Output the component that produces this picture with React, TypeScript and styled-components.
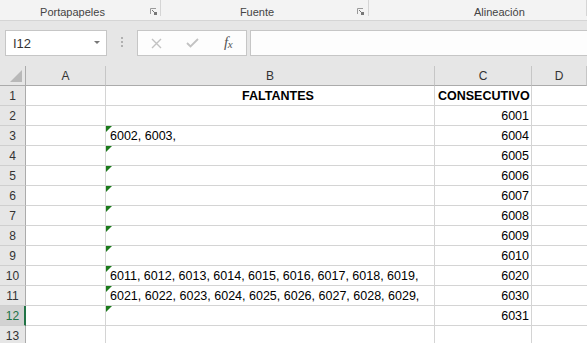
import React from 'react';
import styled, { createGlobalStyle } from 'styled-components';

const Global = createGlobalStyle`
  html, body { margin: 0; padding: 0; background: #e6e6e6; overflow: hidden; }
  body { font-family: "Liberation Sans", Arial, sans-serif; }
`;

const Page = styled.div`
  width: 587px;
  height: 343px;
  overflow: hidden;
  background: #e6e6e6;
  display: flex;
  flex-direction: column;
`;

const Ribbon = styled.div`
  display: flex;
  height: 21px;
  flex-shrink: 0;
  box-sizing: border-box;
  background: #f3f3f3;
  border-bottom: 1px solid #d5d5d5;
`;

const Group = styled.div<{ $w?: number }>`
  position: relative;
  display: flex;
  align-items: flex-start;
  ${(p) => (p.$w ? `width: ${p.$w}px;` : 'flex: 1;')}
  &::after {
    content: '';
    position: absolute;
    right: 0;
    top: 0;
    height: 16px;
    border-right: 1px solid #d5d5d5;
  }
`;

const GroupLabel = styled.div<{ $pl?: number; $pr?: number; $align?: string }>`
  flex: 1;
  padding-top: 5px;
  line-height: 14px;
  font-size: 11px;
  color: #444;
  text-align: ${(p) => p.$align || 'center'};
  padding-left: ${(p) => p.$pl || 0}px;
  padding-right: ${(p) => p.$pr || 0}px;
`;

const Launcher = styled.svg<{ $mr: number }>`
  width: 7px;
  height: 7px;
  margin-top: 8px;
  margin-right: ${(p) => p.$mr}px;
`;

const FormulaBar = styled.div`
  display: flex;
  align-items: stretch;
  height: 26px;
  margin: 9px 0 10px 5px;
  flex-shrink: 0;
`;

const NameBox = styled.div`
  width: 102px;
  box-sizing: border-box;
  border: 1px solid #c6c6c6;
  background: #fff;
  display: flex;
  align-items: center;
  font-size: 13px;
  color: #333;
  padding-left: 7px;
`;

const DropArrow = styled.span`
  margin-left: auto;
  margin-right: 6px;
  width: 0;
  height: 0;
  border-left: 3px solid transparent;
  border-right: 3px solid transparent;
  border-top: 3px solid #777;
  margin-top: -2px;
`;

const DotsSlot = styled.div`
  width: 30px;
  display: flex;
  flex-direction: column;
  align-items: center;
  justify-content: center;
  gap: 2px;
  margin-top: -2px;
`;

const Dot = styled.span`
  width: 2px;
  height: 2px;
  background: #b0b0b0;
`;

const FxBox = styled.div`
  width: 110px;
  box-sizing: border-box;
  border: 1px solid #c6c6c6;
  background: #fdfdfd;
  display: flex;
`;

const FxSlot = styled.div`
  width: 36px;
  display: flex;
  align-items: center;
  justify-content: center;
`;

const FxText = styled.span`
  font-family: "Liberation Serif", "Times New Roman", serif;
  font-style: italic;
  font-size: 15px;
  color: #555;
  letter-spacing: -0.5px;
  margin-top: -2px;
  & > small {
    font-size: 11px;
    position: relative;
    top: 1px;
  }
`;

const Input = styled.div`
  flex: 1;
  margin-left: 3px;
  margin-right: -4px;
  box-sizing: border-box;
  border: 1px solid #c6c6c6;
  background: #fdfdfd;
`;

const Sheet = styled.div`
  display: grid;
  grid-template-columns: 26px 80px 329px 97px 1fr;
  grid-auto-rows: 20px;
  background: #fff;
  font-size: 12.5px;
  color: #000;
`;

const ColHead = styled.div<{ $corner?: boolean }>`
  box-sizing: border-box;
  background: #e6e6e6;
  border-right: 1px solid ${(p) => (p.$corner ? '#ababab' : '#c6c6c6')};
  border-bottom: 1px solid #ababab;
  display: flex;
  align-items: center;
  justify-content: center;
  font-size: 12px;
  color: #333;
  position: relative;
`;

const CornerTri = styled.svg`
  position: absolute;
  right: 3px;
  bottom: 3px;
  width: 12px;
  height: 12px;
`;

const RowHead = styled.div<{ $sel?: boolean }>`
  box-sizing: border-box;
  background: ${(p) => (p.$sel ? '#d2d2d2' : '#e6e6e6')};
  border-right: ${(p) => (p.$sel ? '2px solid #217346' : '1px solid #ababab')};
  border-bottom: 1px solid #cfcfcf;
  display: flex;
  align-items: center;
  justify-content: center;
  padding-left: ${(p) => (p.$sel ? 1 : 0)}px;
  font-size: 12px;
  color: ${(p) => (p.$sel ? '#217346' : '#333')};
`;

const Cell = styled.div<{ $align?: 'left' | 'right' | 'center'; $bold?: boolean; $flag?: boolean; $last?: boolean; $pl?: number }>`
  position: relative;
  box-sizing: border-box;
  border-right: ${(p) => (p.$last ? 'none' : '1px solid #d4d4d4')};
  border-bottom: 1px solid #d4d4d4;
  padding: 1px 2px 0 ${(p) => (p.$pl ?? 4)}px;
  line-height: 18px;
  white-space: nowrap;
  overflow: visible;
  text-align: ${(p) => p.$align || 'left'};
  font-weight: ${(p) => (p.$bold ? 700 : 400)};
  ${(p) =>
    p.$flag
      ? `&::before {
    content: '';
    position: absolute;
    left: 0;
    top: 0;
    width: 0;
    height: 0;
    border-top: 6px solid #1a7a1a;
    border-right: 6px solid transparent;
  }`
      : ''}
`;

type Row = { b?: string; c?: string; flag?: boolean };

const rows: Row[] = [
  { c: '6001' },
  { b: '6002, 6003,', c: '6004', flag: true },
  { c: '6005', flag: true },
  { c: '6006', flag: true },
  { c: '6007', flag: true },
  { c: '6008', flag: true },
  { c: '6009', flag: true },
  { c: '6010', flag: true },
  { b: '6011, 6012, 6013, 6014, 6015, 6016, 6017, 6018, 6019,', c: '6020', flag: true },
  { b: '6021, 6022, 6023, 6024, 6025, 6026, 6027, 6028, 6029,', c: '6030', flag: true },
  { c: '6031', flag: true },
  {},
];

const LauncherIcon = ({ mr }: { mr: number }) => (
  <Launcher $mr={mr} viewBox="0 0 7 7">
    <path d="M0.5 6 V0.5 H6" stroke="#9a9a9a" strokeWidth="1" fill="none" />
    <path d="M2 2 L5 5" stroke="#777" strokeWidth="1" />
    <rect x="4" y="4" width="3" height="3" fill="#777" />
  </Launcher>
);

export default function App() {
  return (
    <Page>
      <Global />
      <Ribbon>
        <Group $w={161}>
          <GroupLabel $pr={5}>Portapapeles</GroupLabel>
          <LauncherIcon mr={4} />
        </Group>
        <Group $w={208}>
          <GroupLabel $pr={4}>Fuente</GroupLabel>
          <LauncherIcon mr={5} />
        </Group>
        <Group>
          <GroupLabel $align="left" $pl={105}>Alineación</GroupLabel>
        </Group>
      </Ribbon>
      <FormulaBar>
        <NameBox>
          I12
          <DropArrow />
        </NameBox>
        <DotsSlot>
          <Dot />
          <Dot />
          <Dot />
        </DotsSlot>
        <FxBox>
          <FxSlot>
            <svg width="11" height="11" viewBox="0 0 11 11">
              <path d="M1 1 L10 10 M10 1 L1 10" stroke="#c2c2c2" strokeWidth="1.4" />
            </svg>
          </FxSlot>
          <FxSlot>
            <svg width="13" height="10" viewBox="0 0 13 10">
              <path d="M1 5 L4.5 8.5 L12 1" stroke="#c2c2c2" strokeWidth="1.8" fill="none" />
            </svg>
          </FxSlot>
          <FxSlot>
            <FxText>
              f<small>x</small>
            </FxText>
          </FxSlot>
        </FxBox>
        <Input />
      </FormulaBar>
      <Sheet>
        <ColHead $corner>
          <CornerTri viewBox="0 0 12 12">
            <polygon points="12,0 12,12 0,12" fill="#b8b8b8" />
          </CornerTri>
        </ColHead>
        <ColHead>A</ColHead>
        <ColHead>B</ColHead>
        <ColHead>C</ColHead>
        <ColHead>D</ColHead>

        <RowHead>1</RowHead>
        <Cell />
        <Cell $align="center" $bold $pl={18}>
          FALTANTES
        </Cell>
        <Cell $bold $pl={3}>
          CONSECUTIVO
        </Cell>
        <Cell $last />

        {rows.map((r, i) => (
          <React.Fragment key={i}>
            <RowHead $sel={i + 2 === 12}>{i + 2}</RowHead>
            <Cell />
            <Cell $flag={r.flag}>{r.b}</Cell>
            <Cell $align="right">{r.c}</Cell>
            <Cell $last />
          </React.Fragment>
        ))}
      </Sheet>
    </Page>
  );
}
